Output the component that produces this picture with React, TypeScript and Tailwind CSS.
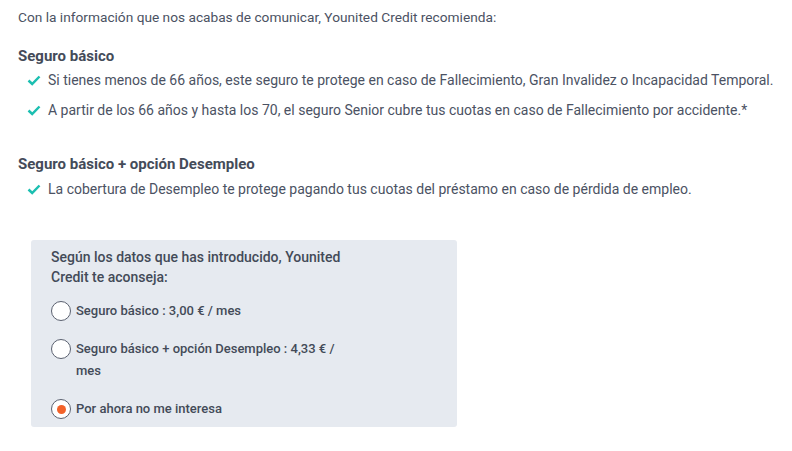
import { useState } from "react";

const Check = () => (
  <svg width="14" height="11" viewBox="0 0 14 11" className="shrink-0">
    <polyline points="1.5,5.5 5.2,9 12.5,1.5" fill="none" stroke="#1cbfb1" strokeWidth="2.5" />
  </svg>
);

function Bullet({ children }: { children: React.ReactNode }) {
  return (
    <li className="flex items-center gap-[7px] pl-[9px] leading-5">
      <Check />
      <span>{children}</span>
    </li>
  );
}

const options = [
  "Seguro básico : 3,00 € / mes",
  "Seguro básico + opción Desempleo : 4,33 € / mes",
  "Por ahora no me interesa",
];

export default function App() {
  const [choice, setChoice] = useState(2);

  return (
    <div className="min-h-screen bg-white pl-[18px] pt-[7px] text-[14px] text-[#4b5263] font-['Roboto',sans-serif]">
      <p className="text-[13.7px] leading-5">Con la información que nos acabas de comunicar, Younited Credit recomienda:</p>

      <h3 className="mt-[19px] text-[15px] font-bold leading-5 text-[#444b59]">Seguro básico</h3>
      <ul className="mt-[4px] flex flex-col gap-[10px]">
        <Bullet>Si tienes menos de 66 años, este seguro te protege en caso de Fallecimiento, Gran Invalidez o Incapacidad Temporal.</Bullet>
        <Bullet>A partir de los 66 años y hasta los 70, el seguro Senior cubre tus cuotas en caso de Fallecimiento por accidente.*</Bullet>
      </ul>

      <h3 className="mt-[34px] text-[15px] font-bold leading-5 text-[#444b59]">Seguro básico + opción Desempleo</h3>
      <ul className="mt-[5px]">
        <Bullet>La cobertura de Desempleo te protege pagando tus cuotas del préstamo en caso de pérdida de empleo.</Bullet>
      </ul>

      <div className="ml-[13px] mt-[41px] w-[426px] rounded-[3px] bg-[#e6eaf0] pl-[20px] pt-[7px] pb-[7px]">
        <div className="w-[300px]">
          <p className="font-medium leading-5 text-[#434a58]">Según los datos que has introducido, Younited Credit te aconseja:</p>
          <div className="mt-[13px] flex flex-col gap-[16px]">
            {options.map((o, i) => (
              <label key={o} className="flex cursor-pointer items-start gap-[5px] text-[13px] font-medium leading-[22px] text-[#434a58]" onClick={() => setChoice(i)}>
                <span className="mt-[1px] flex h-[20px] w-[20px] shrink-0 items-center justify-center rounded-full border border-[#5b6170] bg-white">
                  {choice === i && <span className="h-[9px] w-[9px] rounded-full bg-[#f2622a]" />}
                </span>
                <span>{o}</span>
              </label>
            ))}
          </div>
        </div>
      </div>
    </div>
  );
}
